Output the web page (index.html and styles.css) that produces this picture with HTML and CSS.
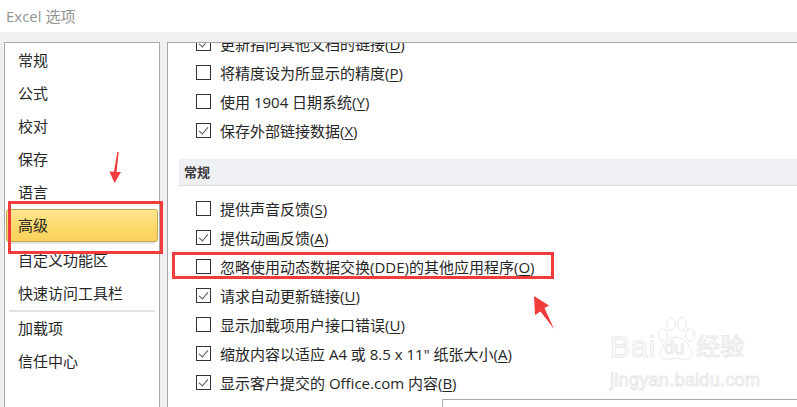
FILE: index.html
```html
<!DOCTYPE html>
<html lang="zh-CN">
<head>
    <meta charset="UTF-8" />
    <title>Excel 选项</title>
    <link rel="stylesheet" href="styles.css">
</head>

<body>
    <div class="titlebar">Excel 选项</div>

    <div class="dialog">
        <nav class="sidebar">
            <div class="nav-item">常规</div>
            <div class="nav-item">公式</div>
            <div class="nav-item">校对</div>
            <div class="nav-item">保存</div>
            <div class="nav-item">语言</div>
            <div class="nav-item active">高级</div>
            <div class="nav-sep"></div>
            <div class="nav-item">自定义功能区</div>
            <div class="nav-item">快速访问工具栏</div>
            <div class="nav-sep"></div>
            <div class="nav-item">加载项</div>
            <div class="nav-item">信任中心</div>
        </nav>

        <section class="options">
            <div class="option-list">
                <label class="option"><span class="box checked"></span><span>更新指向其他文档的链接(<u>D</u>)</span></label>
                <label class="option"><span class="box"></span><span>将精度设为所显示的精度(<u>P</u>)</span></label>
                <label class="option"><span class="box"></span><span>使用 1904 日期系统(<u>Y</u>)</span></label>
                <label class="option"><span class="box checked"></span><span>保存外部链接数据(<u>X</u>)</span></label>

                <div class="group-head">常规</div>

                <label class="option"><span class="box"></span><span>提供声音反馈(<u>S</u>)</span></label>
                <label class="option"><span class="box checked"></span><span>提供动画反馈(<u>A</u>)</span></label>
                <label class="option"><span class="box"></span><span>忽略使用动态数据交换(DDE)的其他应用程序(<u>O</u>)</span></label>
                <label class="option"><span class="box checked"></span><span>请求自动更新链接(<u>U</u>)</span></label>
                <label class="option"><span class="box"></span><span>显示加载项用户接口错误(<u>U</u>)</span></label>
                <label class="option"><span class="box checked"></span><span>缩放内容以适应 A4 或 8.5 x 11" 纸张大小(<u>A</u>)</span></label>
                <label class="option"><span class="box checked"></span><span>显示客户提交的 Office.com 内容(<u>B</u>)</span></label>

                <div class="subbox"></div>
            </div>
        </section>
    </div>

    <!-- 주석 표시 (빨간 상자 / 화살표) -->
    <svg class="marks" width="797" height="407" viewBox="0 0 797 407">
        <rect x="9.5" y="202.5" width="152" height="50" fill="none" stroke="#f23b3b" stroke-width="3" />
        <rect x="173.5" y="253.5" width="379" height="24" fill="none" stroke="#f23b3b" stroke-width="3" />
        <polygon points="117.3,152 118.7,152 116.6,172 121,172 114.5,183 109.5,171.5 114,171.8" fill="#f23b3b" />
        <polygon points="534,296 549,305.5 544.5,308 554,329 540.5,311.5 535,315" fill="#f23b3b" />
    </svg>

    <div class="watermark">
        <div class="wm-top">
            <span class="wm-bai">Bai</span>
            <span class="wm-paw">
                <svg width="40" height="46" viewBox="0 0 40 46">
                    <ellipse cx="7" cy="19" rx="4.5" ry="6" fill="none" stroke="#e8e8e8" />
                    <ellipse cx="15" cy="8" rx="4.5" ry="6.5" fill="none" stroke="#e8e8e8" />
                    <ellipse cx="26" cy="8" rx="4.5" ry="6.5" fill="none" stroke="#e8e8e8" />
                    <ellipse cx="34" cy="19" rx="4.5" ry="6" fill="none" stroke="#e8e8e8" />
                    <path d="M20 21 C12 21 4 32 4 38 C4 44 12 44 20 42 C28 44 36 44 36 38 C36 32 28 21 20 21 Z" fill="#fff" stroke="#e8e8e8" />
                </svg>
                <span class="wm-du">du</span>
            </span>
            <span class="wm-jy">经验</span>
        </div>
        <div class="wm-url">jingyan.baidu.com</div>
    </div>
</body>
</html>
```

FILE: styles.css
```css
body {
    margin: 0;
    width: 797px;
    height: 407px;
    overflow: hidden;
    position: relative;
    background-color: #f0f0f0;
    font-family: "Open Sans", "Noto Sans CJK SC", sans-serif;
    color: #262626;
}

.titlebar {
    height: 32px;
    line-height: 32px;
    padding-left: 6px;
    background-color: #fff;
    font-size: 15px;
    color: #939393;
}

.dialog {
    display: flex;
    gap: 7px;
    height: 375px;
    padding: 10px 0 0 4px;
    box-sizing: border-box;
}

/* --- 왼쪽 메뉴 --- */
.sidebar {
    width: 156px;
    flex-shrink: 0;
    padding-top: 1px;
    background-color: #fff;
    border: 1px solid #a8a8ac;
    border-bottom: none;
    box-sizing: border-box;
}

.nav-item {
    height: 33px;
    line-height: 33px;
    padding-left: 13px;
    font-size: 15px;
    white-space: nowrap;
}

.nav-item.active {
    margin: 0 1px;
    padding-left: 11px;
    border: 1px solid #c9a44e;
    border-radius: 3px;
    box-sizing: border-box;
    line-height: 31px;
    background: linear-gradient(#ffe690, #fcd867 60%, #f9d25c);
}

.nav-sep {
    height: 2px;
    margin: 0 4px;
    background-color: #e2e3e7;
}

/* --- 오른쪽 옵션 --- */
.options {
    flex: 1;
    background-color: #fff;
    border-top: 1px solid #a8a8ac;
    border-left: 1px solid #a8a8ac;
    overflow: hidden;
}

.option-list {
    margin-top: -14px;
}

.option {
    display: flex;
    align-items: center;
    gap: 9px;
    height: 29px;
    padding-left: 28px;
    font-size: 15px;
    white-space: nowrap;
}

.option u {
    text-decoration-thickness: 1px;
    text-underline-offset: 2px;
}

.box {
    width: 15px;
    height: 15px;
    flex-shrink: 0;
    border: 1px solid #333;
    box-sizing: border-box;
    background-color: #fff;
    position: relative;
}

.box.checked::after {
    content: "";
    position: absolute;
    left: 4px;
    top: 1px;
    width: 4px;
    height: 8px;
    border-right: 1px solid #555;
    border-bottom: 1px solid #555;
    transform: rotate(40deg);
}

.group-head {
    height: 27px;
    line-height: 26px;
    margin: 14px 0 8px 11px;
    padding-left: 5px;
    box-sizing: border-box;
    background-color: #eff0f4;
    border-bottom: 1px solid #dcdde2;
    font-size: 13px;
    font-weight: bold;
    color: #3a3a3a;
}

.subbox {
    height: 40px;
    margin: 2px 0 0 274px;
    border-top: 1px solid #aaaab0;
    border-left: 1px solid #aaaab0;
}

/* --- 표시 / 워터마크 --- */
.marks {
    position: absolute;
    left: 0;
    top: 0;
    pointer-events: none;
}

.watermark {
    position: absolute;
    left: 610px;
    top: 316px;
    font-family: "Liberation Sans", "Noto Sans CJK SC", sans-serif;
    color: #fff;
    -webkit-text-stroke: 1px #e8e8e8;
    pointer-events: none;
}

.wm-top {
    display: flex;
    align-items: flex-end;
}

.wm-bai {
    font-size: 30px;
    line-height: 30px;
    letter-spacing: 1px;
}

.wm-paw {
    position: relative;
    width: 40px;
    height: 46px;
}

.wm-paw svg {
    display: block;
}

.wm-du {
    position: absolute;
    left: 8px;
    top: 22px;
    font-size: 18px;
}

.wm-jy {
    font-size: 24px;
    line-height: 30px;
}

.wm-url {
    margin-top: 8px;
    font-size: 18px;
    letter-spacing: 0.3px;
}
```
